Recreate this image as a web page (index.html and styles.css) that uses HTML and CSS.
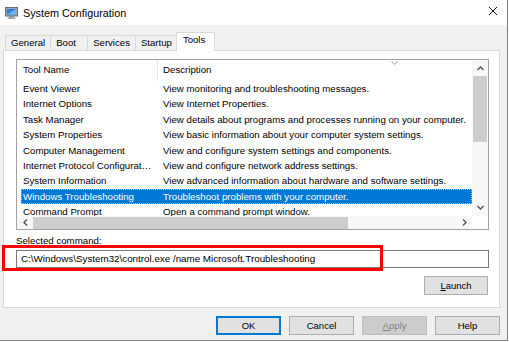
FILE: index.html
```html
<!DOCTYPE html>
<html lang="en">
<head>
    <meta charset="UTF-8">
    <title>System Configuration</title>
    <link rel="stylesheet" href="styles.css">
</head>
<body>
    <div class="window">
        <div class="titlebar">
            <svg class="app-icon" width="13" height="12" viewBox="0 0 13 12">
                <rect x="0.5" y="0.5" width="12" height="8.5" fill="#9aa8b8" stroke="#5f6f82"/>
                <rect x="2" y="2" width="9" height="5.5" fill="#2f7fd8"/>
                <path d="M2 7.5 L11 2 L11 7.5 Z" fill="#6fb3f0"/>
                <rect x="4" y="9.5" width="5" height="1.2" fill="#6a7888"/>
                <rect x="2.5" y="10.6" width="8" height="1.2" fill="#8d99a6"/>
            </svg>
            <span class="title">System Configuration</span>
            <svg class="close" width="10" height="10" viewBox="0 0 10 10">
                <path d="M1 1 L9 9 M9 1 L1 9" stroke="#111" stroke-width="1"/>
            </svg>
        </div>

        <div class="client">
            <div class="tabs">
                <div class="tab">General</div>
                <div class="tab">Boot</div>
                <div class="tab">Services</div>
                <div class="tab">Startup</div>
                <div class="tab active">Tools</div>
            </div>

            <div class="panel">
                <div class="listview">
                    <div class="list-main">
                        <div class="list-head">
                            <div class="cell name">Tool Name</div>
                            <div class="cell desc">Description
                                <svg class="sort" width="7" height="4" viewBox="0 0 7 4"><path d="M0.5 0.5 L3.5 3.3 L6.5 0.5" fill="none" stroke="#9a9a9a" stroke-width="1"/></svg>
                            </div>
                        </div>
                        <div class="list-body">
                            <div class="row"><div class="cell name">Event Viewer</div><div class="cell desc">View monitoring and troubleshooting messages.</div></div>
                            <div class="row"><div class="cell name">Internet Options</div><div class="cell desc">View Internet Properties.</div></div>
                            <div class="row"><div class="cell name">Task Manager</div><div class="cell desc">View details about programs and processes running on your computer.</div></div>
                            <div class="row"><div class="cell name">System Properties</div><div class="cell desc">View basic information about your computer system settings.</div></div>
                            <div class="row"><div class="cell name">Computer Management</div><div class="cell desc">View and configure system settings and components.</div></div>
                            <div class="row"><div class="cell name">Internet Protocol Configuration</div><div class="cell desc">View and configure network address settings.</div></div>
                            <div class="row"><div class="cell name">System Information</div><div class="cell desc">View advanced information about hardware and software settings.</div></div>
                            <div class="row selected"><div class="cell name">Windows Troubleshooting</div><div class="cell desc">Troubleshoot problems with your computer.</div></div>
                            <div class="row"><div class="cell name">Command Prompt</div><div class="cell desc">Open a command prompt window.</div></div>
                        </div>
                    </div>
                    <div class="vscroll">
                        <div class="arrow">
                            <svg width="7" height="5" viewBox="0 0 7 5"><path d="M0.5 4 L3.5 1 L6.5 4" fill="none" stroke="#505050" stroke-width="1.3"/></svg>
                        </div>
                        <div class="vthumb"></div>
                        <div class="track"></div>
                        <div class="arrow">
                            <svg width="7" height="5" viewBox="0 0 7 5"><path d="M0.5 1 L3.5 4 L6.5 1" fill="none" stroke="#505050" stroke-width="1.3"/></svg>
                        </div>
                    </div>
                    <div class="hscroll">
                        <div class="arrow">
                            <svg width="5" height="7" viewBox="0 0 5 7"><path d="M4 0.5 L1 3.5 L4 6.5" fill="none" stroke="#505050" stroke-width="1.3"/></svg>
                        </div>
                        <div class="hthumb"></div>
                        <div class="track"></div>
                        <div class="arrow">
                            <svg width="5" height="7" viewBox="0 0 5 7"><path d="M1 0.5 L4 3.5 L1 6.5" fill="none" stroke="#505050" stroke-width="1.3"/></svg>
                        </div>
                    </div>
                    <div class="corner"></div>
                </div>

                <div class="cmd-label">Selected command:</div>
                <div class="cmd-box">C:\Windows\System32\control.exe /name Microsoft.Troubleshooting</div>
                <div class="launch-row">
                    <button class="btn"><u>L</u>aunch</button>
                </div>
            </div>

            <div class="buttons">
                <button class="btn default">OK</button>
                <button class="btn">Cancel</button>
                <button class="btn disabled"><u>A</u>pply</button>
                <button class="btn">Help</button>
            </div>
        </div>

        <div class="callout"></div>
    </div>
</body>
</html>
```

FILE: styles.css
```css
* {
    box-sizing: border-box;
}
body {
    margin: 0;
    background: #fff;
    font-family: 'Liberation Sans', Arial, sans-serif;
    color: #000;
}
.window {
    position: relative;
    width: 508px;
    height: 341px;
    border-right: 1px solid #7f7f7f;
    border-bottom: 1px solid #7f7f7f;
}
.titlebar {
    height: 25px;
    background: #fff;
    display: flex;
    align-items: center;
    padding-left: 5px;
}
.app-icon {
    margin-right: 5px;
    margin-top: 1px;
}
.title {
    font-size: 10.8px;
    flex: 1;
}
.close {
    margin-right: 9px;
    margin-top: -3px;
}
.client {
    height: 315px;
    background: #f0f0f0;
}

/* tabs */
.tabs {
    display: flex;
    align-items: flex-end;
    height: 25px;
    padding-left: 5px;
}
.tab {
    height: 15px;
    min-width: 38px;
    padding: 0 5px;
    margin-right: -1px;
    border: 1px solid #d9d9d9;
    border-bottom: none;
    font-size: 9.6px;
    line-height: 14px;
    white-space: nowrap;
}
.tab.active {
    position: relative;
    z-index: 1;
    height: 19px;
    margin: 0 -2px -1px -1px;
    padding: 0 9px 0 6px;
    background: #fff;
    line-height: 14px;
}

/* tab page */
.panel {
    margin-left: 3px;
    width: 497px;
    height: 258px;
    background: #fff;
    border: 1px solid #d9d9d9;
    padding: 8px 10px 0 12px;
}
.listview {
    display: grid;
    grid-template-columns: 1fr 16px;
    grid-template-rows: 156px 13px;
    border: 1px solid #a3a3a3;
    font-size: 9.7px;
}
.list-main {
    overflow: hidden;
}
.list-head,
.row {
    display: grid;
    grid-template-columns: 137px 1fr;
    margin-left: 4px;
    white-space: nowrap;
}
.list-head {
    height: 21px;
    line-height: 20px;
}
.list-head .name {
    border-right: 1px solid #e5e5e5;
}
.list-head .desc {
    position: relative;
}
.sort {
    position: absolute;
    left: 233px;
    top: 1px;
}
.row {
    height: 15.4px;
    line-height: 15.4px;
}
.cell {
    overflow: hidden;
    text-overflow: ellipsis;
}
.cell.name {
    padding: 0 5px 0 2px;
}
.cell.desc {
    padding-left: 5px;
}
.row.selected {
    background: #0078d7;
    color: #fff;
    outline: 1px dotted #9cc8f0;
    outline-offset: -1px;
}

/* scrollbars */
.vscroll,
.hscroll {
    display: flex;
    background: #f7f7f7;
}
.vscroll {
    flex-direction: column;
}
.vscroll .arrow {
    height: 16px;
    display: flex;
    align-items: center;
    justify-content: center;
}
.vscroll .arrow:last-child {
    height: 17px;
}
.vthumb {
    height: 66px;
    margin: 0 1px;
    background: #cdcdcd;
}
.track {
    flex: 1;
}
.hscroll .arrow {
    width: 16px;
    display: flex;
    align-items: center;
    justify-content: center;
}
.hthumb {
    width: 315px;
    margin: 1px 0 0;
    background: #cdcdcd;
}
.corner {
    background: #fff;
}

/* command */
.cmd-label {
    margin-top: 4px;
    font-size: 9.7px;
    line-height: 13px;
}
.cmd-box {
    margin-top: 3px;
    height: 18px;
    border: 1px solid #7a7a7a;
    padding-left: 4px;
    font-size: 9.8px;
    line-height: 16px;
    white-space: nowrap;
}
.launch-row {
    display: flex;
    justify-content: flex-end;
    margin-top: 8px;
    padding-right: 1px;
}

/* buttons */
.btn {
    width: 64px;
    height: 19px;
    padding: 0;
    font-family: inherit;
    font-size: 9.5px;
    color: #000;
    background: #e1e1e1;
    border: 1px solid #adadad;
}
.btn.default {
    border-color: #0078d7;
    box-shadow: inset 0 0 0 1px #0078d7;
}
.btn.disabled {
    background: #cccccc;
    border-color: #bfbfbf;
    color: #838383;
}
.buttons {
    display: flex;
    justify-content: flex-end;
    gap: 8px;
    padding: 8px 7px 0 0;
}
.buttons .btn {
    width: 65px;
}

/* red annotation */
.callout {
    position: absolute;
    left: 2px;
    top: 245px;
    width: 381px;
    height: 26px;
    border: 3px solid #f00;
}
```
